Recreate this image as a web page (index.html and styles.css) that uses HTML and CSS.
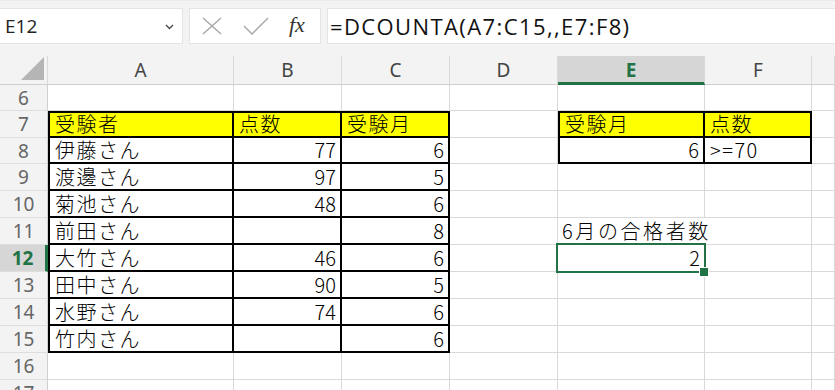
FILE: index.html
```html
<!DOCTYPE html>
<html lang="ja">
<head>
<meta charset="utf-8">
<title>DCOUNTA</title>
<link rel="stylesheet" href="styles.css">
</head>
<body>
<div class="toolbar">
  <div class="namebox">
    <span class="name">E12</span>
    <svg class="chev" width="9" height="6" viewBox="0 0 9 6"><path d="M1 1 L4.5 4.5 L8 1" fill="none" stroke="#444" stroke-width="1.3"/></svg>
  </div>
  <div class="fxbox">
    <svg class="icon" width="20" height="18" viewBox="0 0 20 18"><path d="M1 1 L19 17 M19 1 L1 17" stroke="#a6a6a6" stroke-width="1.4" fill="none"/></svg>
    <svg class="icon" width="26" height="18" viewBox="0 0 26 18"><path d="M1 9 L9 17 L25 1" stroke="#a6a6a6" stroke-width="1.4" fill="none"/></svg>
    <span class="fx">fx</span>
  </div>
  <div class="formula">=DCOUNTA(A7:C15,,E7:F8)</div>
</div>
<div class="sheet">
  <div class="ch corner"><svg width="23" height="23" viewBox="0 0 23 23"><path d="M23 0 L23 23 L0 23 Z" fill="#b5b5b5"/></svg></div>
  <div class="ch">A</div>
  <div class="ch">B</div>
  <div class="ch">C</div>
  <div class="ch">D</div>
  <div class="ch sel">E</div>
  <div class="ch">F</div>
  <div class="ch"></div>

  <div class="rh">6</div>
  <div class="c"></div><div class="c"></div><div class="c"></div><div class="c"></div><div class="c"></div><div class="c"></div><div class="c"></div>

  <div class="rh">7</div>
  <div class="c t y bt bl">受験者</div><div class="c t y bt">点数</div><div class="c t y bt">受験月</div><div class="c"></div><div class="c t y bt bl">受験月</div><div class="c t y bt">点数</div><div class="c"></div>

  <div class="rh">8</div>
  <div class="c t bl">伊藤さん</div><div class="c t r">77</div><div class="c t r">6</div><div class="c"></div><div class="c t bl r">6</div><div class="c t">&gt;=70</div><div class="c"></div>

  <div class="rh">9</div>
  <div class="c t bl">渡邊さん</div><div class="c t r">97</div><div class="c t r">5</div><div class="c"></div><div class="c"></div><div class="c"></div><div class="c"></div>

  <div class="rh">10</div>
  <div class="c t bl">菊池さん</div><div class="c t r">48</div><div class="c t r">6</div><div class="c"></div><div class="c"></div><div class="c"></div><div class="c"></div>

  <div class="rh">11</div>
  <div class="c t bl">前田さん</div><div class="c t r"></div><div class="c t r">8</div><div class="c"></div><div class="c over">6月の合格者数</div><div class="c nob"></div><div class="c"></div>

  <div class="rh rsel">12</div>
  <div class="c t bl">大竹さん</div><div class="c t r">46</div><div class="c t r">6</div><div class="c"></div><div class="c r active">2<span class="handle"></span></div><div class="c"></div><div class="c"></div>

  <div class="rh">13</div>
  <div class="c t bl">田中さん</div><div class="c t r">90</div><div class="c t r">5</div><div class="c"></div><div class="c"></div><div class="c"></div><div class="c"></div>

  <div class="rh">14</div>
  <div class="c t bl">水野さん</div><div class="c t r">74</div><div class="c t r">6</div><div class="c"></div><div class="c"></div><div class="c"></div><div class="c"></div>

  <div class="rh">15</div>
  <div class="c t bl">竹内さん</div><div class="c t r"></div><div class="c t r">6</div><div class="c"></div><div class="c"></div><div class="c"></div><div class="c"></div>

  <div class="rh">16</div>
  <div class="c"></div><div class="c"></div><div class="c"></div><div class="c"></div><div class="c"></div><div class="c"></div><div class="c"></div>

  <div class="rh">17</div>
  <div class="c"></div><div class="c"></div><div class="c"></div><div class="c"></div><div class="c"></div><div class="c"></div><div class="c"></div>
</div>
</body>
</html>
```
FILE: styles.css
```css
* { box-sizing: border-box; }
html, body { margin: 0; padding: 0; background: #fff; overflow: hidden; }
body { width: 835px; height: 390px; }

.toolbar {
  height: 56px;
  background: #f3f3f3;
  border-top: 1px dotted #e2e2e2;
  padding: 7px 0 0 0;
  display: flex;
  align-items: flex-start;
}
.namebox {
  width: 183px;
  height: 36px;
  background: #fff;
  border: 1px solid #e4e4e4;
  border-left: none;
  display: flex;
  align-items: center;
  justify-content: space-between;
  padding: 0 8px 0 5px;
}
.name {
  font-family: "Open Sans", "Noto Sans", sans-serif;
  font-size: 19px;
  color: #222;
}
.chev { margin-top: 2px; }
.fxbox {
  width: 132px;
  height: 36px;
  margin-left: 6px;
  background: #fff;
  border: 1px solid #e4e4e4;
  display: flex;
  align-items: center;
  padding: 0 0 0 12px;
  gap: 0;
}
.fxbox .icon:first-child { margin-right: 21px; }
.fxbox .icon:nth-child(2) { margin-right: 20px; }
.fx {
  font-family: "Liberation Serif", serif;
  font-style: italic;
  font-size: 22px;
  color: #333;
  margin-top: -2px;
}
.formula {
  flex: 1;
  height: 36px;
  margin-left: 6px;
  background: #fff;
  border: 1px solid #e4e4e4;
  border-right: none;
  font-family: "Open Sans", "Noto Sans", sans-serif;
  font-size: 22px;
  letter-spacing: 1.4px;
  color: #111;
  line-height: 34px;
  padding-left: 2px;
  white-space: nowrap;
}

.sheet {
  display: grid;
  grid-template-columns: 48px 186px 108px 108px 108px 147px 107px 1fr;
  grid-template-rows: 29px 26px 27px 26px 27px 27px 27px 27px 27px 27px 27px 27px 27px;
}
.ch {
  background: #f3f3f3;
  border-right: 1px solid #dadada;
  border-bottom: 1px solid #cfcfcf;
  font-family: "Noto Sans", sans-serif;
  font-size: 19px;
  color: #444;
  display: flex;
  align-items: center;
  justify-content: center;
  padding-bottom: 1px;
}
.ch.corner {
  justify-content: flex-end;
  align-items: flex-end;
  padding: 0 3px 4px 0;
}
.ch.sel {
  background: #d6d6d6;
  color: #217346;
  font-weight: bold;
  border-bottom: 3px solid #217346;
  padding-top: 2px;
}
.rh {
  background: #f3f3f3;
  border-right: 1px solid #cfcfcf;
  border-bottom: 1px solid #dedede;
  font-family: "Noto Sans", sans-serif;
  font-size: 19px;
  color: #666;
  display: flex;
  align-items: center;
  justify-content: center;
}
.rh.rsel {
  background: #d6d6d6;
  color: #217346;
  font-weight: bold;
  border-right: 3px solid #217346;
}
.c {
  border-right: 1px solid #d9d9d9;
  border-bottom: 1px solid #d9d9d9;
  font-family: "Noto Sans CJK JP", sans-serif;
  font-weight: 300;
  font-size: 20px;
  letter-spacing: 1.5px;
  line-height: 24px;
  color: #000;
  display: flex;
  align-items: flex-end;
  padding: 0 4px 1px 5px;
  white-space: nowrap;
  position: relative;
}
.c.t {
  border-right: 2px solid #000;
  border-bottom: 2px solid #000;
  padding-bottom: 0;
}
.c.bt { border-top: 2px solid #000; }
.c.bl { border-left: 2px solid #000; }
.c.y { background: #ffff00; }
.c.r { justify-content: flex-end; letter-spacing: 0; }
.c.over { overflow: visible; border-right: none; letter-spacing: 2.6px; padding-left: 4px; }
.c.active { z-index: 2; }
.c.active::before {
  content: "";
  position: absolute;
  left: -2px; top: -2px; right: -2px; bottom: -2px;
  border: 2px solid #217346;
  pointer-events: none;
}
.handle {
  position: absolute;
  right: -5px;
  bottom: -6px;
  width: 8px;
  height: 8px;
  background: #217346;
  border: 1px solid #fff;
  box-sizing: content-box;
}
```
